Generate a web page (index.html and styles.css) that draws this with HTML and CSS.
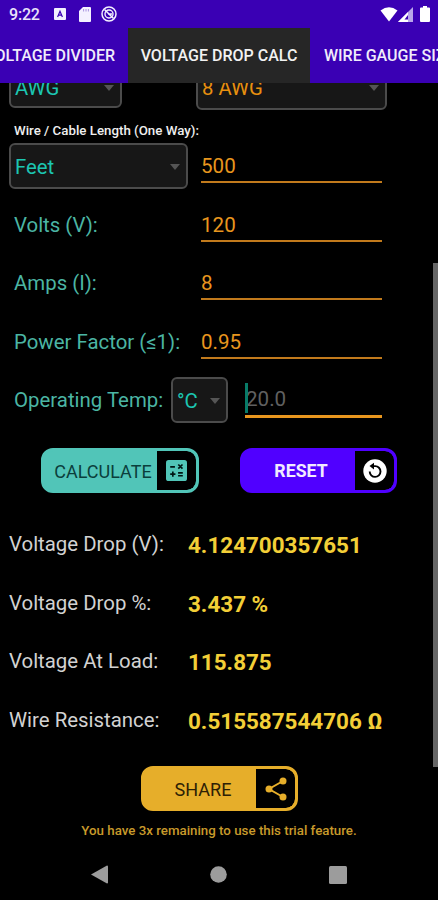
FILE: index.html
```html
<!DOCTYPE html>
<html lang="en">
<head>
<meta charset="utf-8">
<title>Voltage Drop Calc</title>
<link rel="stylesheet" href="styles.css">
</head>
<body>
<div class="screen">
  <header class="status">
    <span class="clock">9:22</span>
    <svg class="st-a" viewBox="0 0 12 12" width="12" height="12"><rect width="12" height="12" rx="1" fill="#f4f1ff"/><path d="M3.6 9 6 3.2 8.4 9M4.5 7.2h3" fill="none" stroke="#3a00b4" stroke-width="1.2"/></svg>
    <svg class="st-sd" viewBox="0 0 12 15" width="12" height="15"><path d="M4 0h7q1 0 1 1v13q0 1-1 1H1q-1 0-1-1V4z" fill="#f4f1ff"/><path d="M4.6 2v2.5M7 2v2.5M9.4 2v2.5" stroke="#a894e0" stroke-width="1"/></svg>
    <svg class="st-c" viewBox="0 0 16 16" width="16" height="16" fill="none" stroke="#f4f1ff"><circle cx="8" cy="8" r="7" stroke-width="1.5"/><circle cx="8" cy="8" r="4" stroke-width="1.4"/><path d="M3.5 3.5l9 9M7 8h4" stroke-width="1.5"/></svg>
    <span class="grow"></span>
    <svg viewBox="0 0 18 15" width="18" height="15"><path d="M.5 3.6Q9-3 17.500 3.600L9 14.500z" fill="#fff"/></svg>
    <svg viewBox="0 0 15 15" width="15" height="15"><path d="M0 15 15 0v15z" fill="#b9a6ea"/><path d="M0 15 10 5v10z" fill="#fff"/><path d="M6.500 12.500 10 8v4.500z" fill="#3a00b4"/></svg>
    <svg class="st-bat" viewBox="0 0 10 16" width="10" height="16"><path d="M3 0h4v1.500h2q1 0 1 1V15q0 1-1 1H1q-1 0-1-1V2.500q0-1 1-1h2z" fill="#fff"/></svg>
  </header>
  <nav class="tabs">
    <div class="tab tab-left"><span>VOLTAGE DIVIDER</span></div>
    <div class="tab tab-active"><span>VOLTAGE DROP CALC</span></div>
    <div class="tab tab-right"><span>WIRE GAUGE SIZE</span></div>
  </nav>
  <main class="content">
    <div class="clipped">
      <div class="select sel-awg"><span>AWG</span><i class="caret"></i></div>
      <div class="select sel-size"><span>8 AWG</span><i class="caret"></i></div>
    </div>
    <div class="hint"><span>Wire / Cable Length (One Way):</span></div>
    <div class="row">
      <div class="select sel-feet"><span>Feet</span><i class="caret"></i></div>
      <div class="field">500</div>
    </div>
    <div class="row"><span class="label">Volts (V):</span><div class="field thin">120</div></div>
    <div class="row"><span class="label">Amps (I):</span><div class="field thin">8</div></div>
    <div class="row"><span class="label">Power Factor (≤1):</span><div class="field">0.95</div></div>
    <div class="row">
      <span class="label label-temp">Operating Temp:</span>
      <div class="select sel-temp"><span>°C</span><i class="caret"></i></div>
      <div class="field temp"><i class="cursor"></i>20.0</div>
    </div>
    <div class="buttons">
      <div class="btn calc"><span class="btn-text"><span>CALCULATE</span></span><span class="btn-icon">
        <svg viewBox="0 0 20 20" width="21" height="21"><rect width="20" height="20" rx="2.500" fill="#51c5b8"/><path d="M4 6.500h4.500M11.700 4.300l4 4M15.700 4.300l-4 4M4 13.500h5M6.500 11v5M11.500 12.300h4.500M11.500 15h4.500" stroke="#001614" stroke-width="1.600"/></svg></span></div>
      <div class="btn reset"><span class="btn-text"><span>RESET</span></span><span class="btn-icon">
        <svg viewBox="0 0 24 24" width="24" height="24"><circle cx="12" cy="12" r="11.700" fill="#fff"/><path d="M10 7.100h2.200a5.400 5.400 0 1 1-5.500 5.400" fill="none" stroke="#000" stroke-width="1.900"/><path d="M6.500 7.100 11 3.700v6.800z" fill="#000"/></svg></span></div>
    </div>
    <div class="results">
      <div class="result"><span class="name">Voltage Drop (V):</span><b>4.124700357651</b></div>
      <div class="result"><span class="name">Voltage Drop %:</span><b>3.437 %</b></div>
      <div class="result"><span class="name">Voltage At Load:</span><b>115.875</b></div>
      <div class="result"><span class="name">Wire Resistance:</span><b>0.515587544706 Ω</b></div>
    </div>
    <div class="share-row">
      <div class="btn share"><span class="btn-text"><span>SHARE</span></span><span class="btn-icon">
        <svg viewBox="0 0 22 24" width="22" height="24"><path d="M18 4 4 12l14 8" fill="none" stroke="#e6ae2a" stroke-width="2"/><g fill="#e6ae2a"><circle cx="18" cy="4" r="3.500"/><circle cx="4" cy="12" r="3.500"/><circle cx="18" cy="20" r="3.500"/></g></svg></span></div>
    </div>
    <p class="trial"><span>You have 3x remaining to use this trial feature.</span></p>
    <i class="scrollbar"></i>
  </main>
  <footer class="navbar">
    <svg viewBox="0 0 17 19" width="17" height="19"><path d="M0 9.500 16 .5q1 0 1 .8v16.400q0 .8-1 .8z" fill="#9c9c9c"/></svg>
    <svg viewBox="0 0 17 17" width="17" height="17"><circle cx="8.500" cy="8.500" r="8.300" fill="#9c9c9c"/></svg>
    <svg viewBox="0 0 18 18" width="18" height="18"><rect width="18" height="18" rx="1.500" fill="#9c9c9c"/></svg>
  </footer>
</div>
</body>
</html>
```
FILE: styles.css
```css
* { box-sizing: border-box; }
body { margin: 0; background: #000; font-family: Roboto, "Liberation Sans", sans-serif; }
i { font-style: normal; }
svg { display: block; flex: none; }
.screen { width: 438px; height: 900px; display: flex; flex-direction: column; overflow: hidden; background: #000; white-space: nowrap; }

.status { height: 28px; flex: none; background: #3a00b4; display: flex; align-items: center; padding: 0 8px 0 9px; }
.clock { width: 45px; color: #e9e3fa; font-size: 16px; font-weight: 500; letter-spacing: -0.2px; }
.st-sd { margin-left: 13px; }
.st-c { margin-left: 10px; }
.st-bat { margin-left: 7px; }
.grow { flex: 1; }

.tabs { height: 55px; flex: none; display: flex; background: #3a00b4; color: #f0ecfb; font-size: 16px; font-weight: 500; }
.tab { display: flex; align-items: center; flex: none; }
.tab-left { width: 128px; justify-content: flex-end; padding-right: 13px; }
.tab-active { width: 182px; justify-content: center; background: #262626; color: #f2f2f2; }
.tab-right { width: 128px; padding-left: 14px; overflow: hidden; }

.content { height: 766px; flex: none; position: relative; overflow: hidden; display: flex; flex-direction: column; }
.select { display: flex; align-items: center; justify-content: space-between; height: 46px; flex: none; padding: 2px 6px 0 4px; background: #171717; border: 2px solid #4b4b4b; border-radius: 6px; color: #1cc6b2; font-size: 20.3px; }
.caret { border: 5.5px solid transparent; border-top: 6px solid #555; border-bottom: 0; }
.clipped { height: 39px; flex: none; display: flex; align-items: flex-end; padding: 0 0 13px 9px; }
.sel-awg { width: 113px; margin-bottom: 1px; padding-top: 5px; }
.sel-size { width: 191px; margin-left: 74px; margin-bottom: -1px; color: #e8900f; }
.hint { height: 14.5px; flex: none; padding: 1px 0 0 14px; color: #efefef; font-size: 13.3px; font-weight: 500; line-height: 16px; }
.row { height: 58.5px; flex: none; display: flex; align-items: center; padding-left: 9px; }
.sel-feet { width: 179px; }
.label { width: 192px; flex: none; padding: 1px 0 0 5px; color: #4bb5a4; font-size: 20.4px; }
.label-temp { width: 162px; }
.field { position: relative; width: 181px; height: 37px; margin-top: -2px; padding-top: 8px; line-height: 24px; border-bottom: 2.5px solid #c17a1c; color: #e8961e; font-size: 20.6px; }
.row .select + .field { margin-left: 13px; }
.thin { border-bottom-width: 2px; }
.sel-temp { width: 57px; padding-left: 4px; }
.row .select + .temp { width: 137px; margin-left: 17px; padding-left: 1px; padding-top: 7px; border-bottom: 3px solid #e8961e; color: #606060; height: 38px; margin-top: -1px; }
.cursor { position: absolute; left: 0; top: 3px; width: 3px; height: 30px; background: #087b68; }

.buttons { height: 86px; flex: none; display: flex; gap: 41px; padding: 19px 0 0 41px; }
.btn { width: 158px; height: 45px; display: flex; border: 3px solid; border-radius: 12px; overflow: hidden; font-size: 18px; }
.btn-text { flex: 1; display: flex; align-items: center; justify-content: center; padding-top: 1px; }
.btn-icon { width: 39px; display: flex; align-items: center; justify-content: center; background: #000; border-radius: 0 9px 9px 0; }
.calc { background: #51c5b8; border-color: #51c5b8; color: #0b3f3c; }
.calc .btn-text { padding-left: 5px; }
.reset { width: 157px; background: #5000ff; border-color: #5000ff; color: #f2eaff; font-weight: 700; font-size: 17.7px; }
.reset .btn-text { padding-left: 4px; }

.result { height: 58.5px; display: flex; align-items: center; color: #d2d2d2; font-size: 20.4px; padding-left: 9px; }
.name { width: 179px; flex: none; }
.result b { color: #f3cf37; font-size: 22.45px; font-weight: 700; padding-top: 2px; }
.share-row { height: 62px; flex: none; display: flex; padding: 17px 0 0 141px; }
.share { width: 157px; background: #e6ae2a; border-color: #e6ae2a; color: #2d2005; }
.share .btn-text { padding-left: 6px; }
.trial { margin: 12px 0 0; text-align: center; color: #c89a2b; font-size: 13.3px; font-weight: 500; line-height: 16px; }
.scrollbar { position: absolute; right: 0; top: 180px; width: 5px; height: 504px; background: #666; }

.navbar { height: 51px; display: flex; justify-content: space-between; align-items: center; padding: 0 91px 0 91px; }
```
